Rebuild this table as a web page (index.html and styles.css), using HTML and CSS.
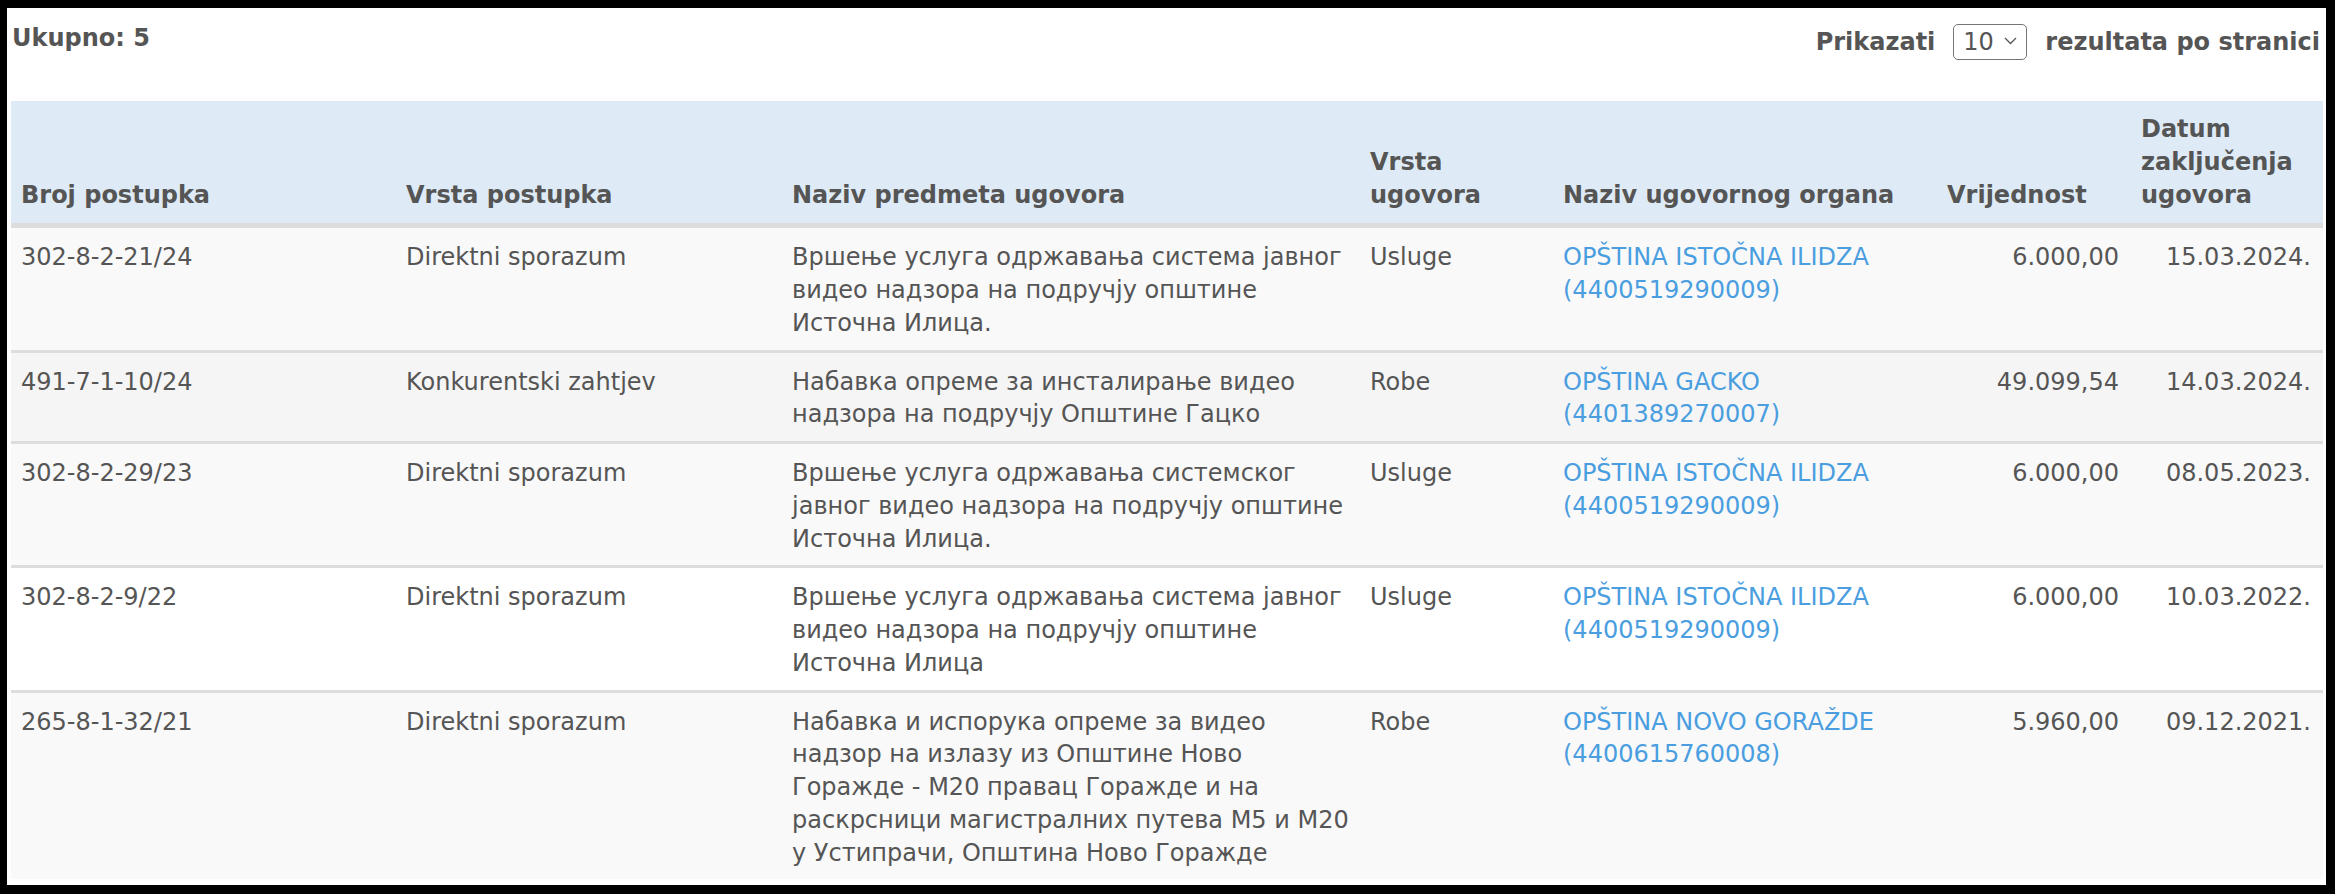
FILE: index.html
```html
<!DOCTYPE html>
<html lang="bs">
<head>
<meta charset="utf-8">
<title>Ugovori</title>
<link rel="stylesheet" href="styles.css">
</head>
<body>
<div class="frame">
  <div class="topbar">
    <div class="total">Ukupno: 5</div>
    <div class="pager">
      <span class="pager-label">Prikazati</span>
      <div class="select">
        <span class="select-value">10</span>
        <svg class="chevron" width="13" height="8" viewBox="0 0 13 8"><path d="M1 1 L6.5 6.5 L12 1" fill="none" stroke="#555" stroke-width="1.3"/></svg>
      </div>
      <span class="pager-label">rezultata po stranici</span>
    </div>
  </div>
  <table class="grid">
    <colgroup>
      <col class="c-broj">
      <col class="c-vrsta">
      <col class="c-naziv">
      <col class="c-vrsta-ug">
      <col class="c-organ">
      <col class="c-vrijednost">
      <col class="c-datum">
    </colgroup>
    <thead>
      <tr>
        <th class="first">Broj postupka</th>
        <th>Vrsta postupka</th>
        <th>Naziv predmeta ugovora</th>
        <th>Vrsta ugovora</th>
        <th>Naziv ugovornog organa</th>
        <th>Vrijednost</th>
        <th>Datum zaključenja ugovora</th>
      </tr>
    </thead>
    <tbody>
      <tr class="r-odd">
        <td class="first">302-8-2-21/24</td>
        <td>Direktni sporazum</td>
        <td class="desc">Вршење услуга одржавања система јавног видео надзора на подручју општине Источна Илица.</td>
        <td>Usluge</td>
        <td><a href="#">OPŠTINA ISTOČNA ILIDZA (4400519290009)</a></td>
        <td class="num value">6.000,00</td>
        <td class="num">15.03.2024.</td>
      </tr>
      <tr class="r-hover">
        <td class="first">491-7-1-10/24</td>
        <td>Konkurentski zahtjev</td>
        <td class="desc">Набавка опреме за инсталирање видео надзора на подручју Општине Гацко</td>
        <td>Robe</td>
        <td><a href="#">OPŠTINA GACKO (4401389270007)</a></td>
        <td class="num value">49.099,54</td>
        <td class="num">14.03.2024.</td>
      </tr>
      <tr class="r-odd">
        <td class="first">302-8-2-29/23</td>
        <td>Direktni sporazum</td>
        <td class="desc">Вршење услуга одржавања системског јавног видео надзора на подручју општине Источна Илица.</td>
        <td>Usluge</td>
        <td><a href="#">OPŠTINA ISTOČNA ILIDZA (4400519290009)</a></td>
        <td class="num value">6.000,00</td>
        <td class="num">08.05.2023.</td>
      </tr>
      <tr class="r-even">
        <td class="first">302-8-2-9/22</td>
        <td>Direktni sporazum</td>
        <td class="desc">Вршење услуга одржавања система јавног видео надзора на подручју општине Источна Илица</td>
        <td>Usluge</td>
        <td><a href="#">OPŠTINA ISTOČNA ILIDZA (4400519290009)</a></td>
        <td class="num value">6.000,00</td>
        <td class="num">10.03.2022.</td>
      </tr>
      <tr class="r-odd">
        <td class="first">265-8-1-32/21</td>
        <td>Direktni sporazum</td>
        <td class="desc">Набавка и испорука опреме за видео надзор на излазу из Општине Ново Горажде - М20 правац Горажде и на раскрсници магистралних путева М5 и М20 у Устипрачи, Општина Ново Горажде</td>
        <td>Robe</td>
        <td><a href="#">OPŠTINA NOVO GORAŽDE (4400615760008)</a></td>
        <td class="num value">5.960,00</td>
        <td class="num">09.12.2021.</td>
      </tr>
    </tbody>
  </table>
</div>
</body>
</html>
```

FILE: styles.css
```css
html, body {
  margin: 0;
  padding: 0;
  background: #000;
}

body {
  font-family: "DejaVu Sans", Verdana, sans-serif;
  font-size: 24px;
  line-height: 32.75px;
  color: #555;
}

.frame {
  margin: 8px 9px 0 7px;
  height: 877px;
  background: #fff;
  overflow: hidden;
  padding: 0 3px 0 4px;
  box-sizing: border-box;
}

.topbar {
  display: flex;
  justify-content: space-between;
  align-items: flex-start;
  height: 93px;
  padding: 14px 3px 0 1px;
  box-sizing: border-box;
}

.total {
  font-weight: bold;
}

.pager {
  display: flex;
  align-items: center;
  gap: 18px;
  height: 36px;
  margin-top: 2px;
}

.pager-label {
  font-weight: bold;
}

.select {
  display: flex;
  align-items: center;
  justify-content: space-between;
  box-sizing: border-box;
  width: 74px;
  height: 36px;
  padding: 0 9px 0 9px;
  border: 1.5px solid #767676;
  border-radius: 5px;
  font-weight: normal;
  color: #555;
}

.select-value {
  line-height: 1;
}

.chevron {
  display: block;
  margin-top: -2px;
}

.grid {
  width: 100%;
  table-layout: fixed;
  border-collapse: separate;
  border-spacing: 0;
}

.c-broj { width: 383px; }
.c-vrsta { width: 386px; }
.c-naziv { width: 578px; }
.c-vrsta-ug { width: 193px; }
.c-organ { width: 384px; }
.c-vrijednost { width: 194px; }
.c-datum { width: 194px; }

.grid th {
  background: #deebf6;
  text-align: left;
  vertical-align: bottom;
  font-weight: bold;
  padding: 12px 12px;
  border-bottom: 2px solid #dddddd;
}

.grid td {
  vertical-align: top;
  padding: 13px 12px 10px;
  border-top: 3px solid #dddddd;
}

.grid th.first,
.grid td.first {
  padding-left: 10px;
}

.grid td.desc {
  padding-right: 0;
}

.grid td.num {
  text-align: right;
}

.grid td.value {
  padding-right: 10px;
}

.r-odd td { background: #f9f9f9; }
.r-even td { background: #ffffff; }
.r-hover td { background: #f5f5f5; }

.grid a {
  color: #4a9ee0;
  text-decoration: none;
}
```
